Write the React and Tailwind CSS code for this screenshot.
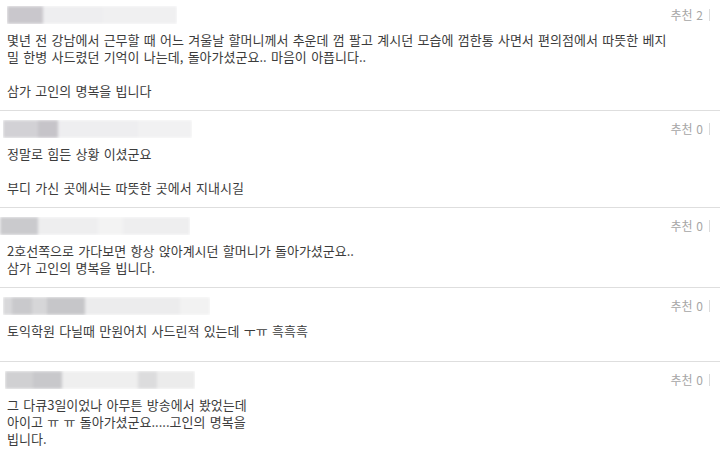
import React from "react";

const comments = [
  {
    likes: 2,
    first: true,
    name: [
      { w: 36, c: "#c9c7cc" },
      { w: 60, c: "#eeeef0" },
      { w: 74, c: "#f0f0f1" },
    ],
    nameX: 7,
    lines: [
      "몇년 전 강남에서 근무할 때 어느 겨울날 할머니께서 추운데 껌 팔고 계시던 모습에 껌한통 사면서 편의점에서 따뜻한 베지",
      "밀 한병 사드렸던 기억이 나는데, 돌아가셨군요.. 마음이 아픕니다..",
      "",
      "삼가 고인의 명복을 빕니다",
    ],
  },
  {
    likes: 0,
    name: [
      { w: 35, c: "#d2d1d5" },
      { w: 20, c: "#c6c4c9" },
      { w: 80, c: "#eeeef0" },
      { w: 54, c: "#f1f1f2" },
    ],
    nameX: 3,
    lines: ["정말로 힘든 상황 이셨군요", "", "부디 가신 곳에서는 따뜻한 곳에서 지내시길"],
  },
  {
    likes: 0,
    name: [
      { w: 38, c: "#cacacd" },
      { w: 60, c: "#eeeeef" },
      { w: 25, c: "#f3f3f3" },
      { w: 67, c: "#eeeeef" },
    ],
    nameX: 0,
    lines: [
      "2호선쪽으로 가다보면 항상 앉아계시던 할머니가 돌아가셨군요..",
      "삼가 고인의 명복을 빕니다.",
    ],
  },
  {
    likes: 0,
    name: [
      { w: 9, c: "#d8d8da" },
      { w: 20, c: "#c9c9cc" },
      { w: 15, c: "#d6d6d8" },
      { w: 38, c: "#c6c6c9" },
      { w: 95, c: "#ececed" },
      { w: 30, c: "#f2f2f2" },
    ],
    nameX: 3,
    extra: 11,
    lines: ["토익학원 다닐때 만원어치 사드린적 있는데 ㅜㅠ 흑흑흑"],
  },
  {
    likes: 0,
    name: [
      { w: 28, c: "#d0d0d2" },
      { w: 29, c: "#c8c8cb" },
      { w: 76, c: "#efefef" },
      { w: 19, c: "#dcdcdd" },
      { w: 38, c: "#ececec" },
    ],
    nameX: 5,
    lines: [
      "그 다큐3일이었나 아무튼 방송에서 봤었는데",
      "아이고 ㅠ ㅠ 돌아가셨군요.....고인의 명복을",
      "빕니다.",
    ],
  },
];

function Comment({ c }) {
  return (
    <div
      className={
        c.first
          ? "pt-[6px] pb-[11px]"
          : "border-t border-[#dedede] pt-[9px] pb-[11px]"
      }
    >
      <div className="flex h-[18px] items-center justify-between">
        <div className="h-[18px] overflow-hidden" style={{ marginLeft: c.nameX }}>
          <div className="flex h-[18px] blur-[1.5px]">
            {c.name.map((s, i) => (
              <div key={i} className="h-full" style={{ width: s.w, background: s.c }} />
            ))}
          </div>
        </div>
        <div className="flex items-center pr-[10px]">
          <span className="text-[12px] leading-[14px] text-[#a6a6a6] [word-spacing:1px]">
            추천 {c.likes}
          </span>
          <span className="ml-[6px] h-[12px] border-l border-[#dcdcdc]" />
        </div>
      </div>
      <div className="mt-[7px] pl-[7px] text-[13px] leading-[17px] text-[#3c3c3c] [word-spacing:1.4px]">
        {c.lines.map((l, i) => (
          <div key={i} className="h-[17px] whitespace-nowrap">
            {l === "" ? "\u00a0" : l}
          </div>
        ))}
      </div>
      {c.extra ? <div style={{ height: c.extra }} /> : null}
    </div>
  );
}

export default function App() {
  return (
    <div
      className="h-[449px] w-[720px] overflow-hidden bg-white"
      style={{ fontFamily: '"Noto Sans CJK KR", "Noto Sans", sans-serif' }}
    >
      {comments.map((c, i) => (
        <Comment key={i} c={c} />
      ))}
    </div>
  );
}
